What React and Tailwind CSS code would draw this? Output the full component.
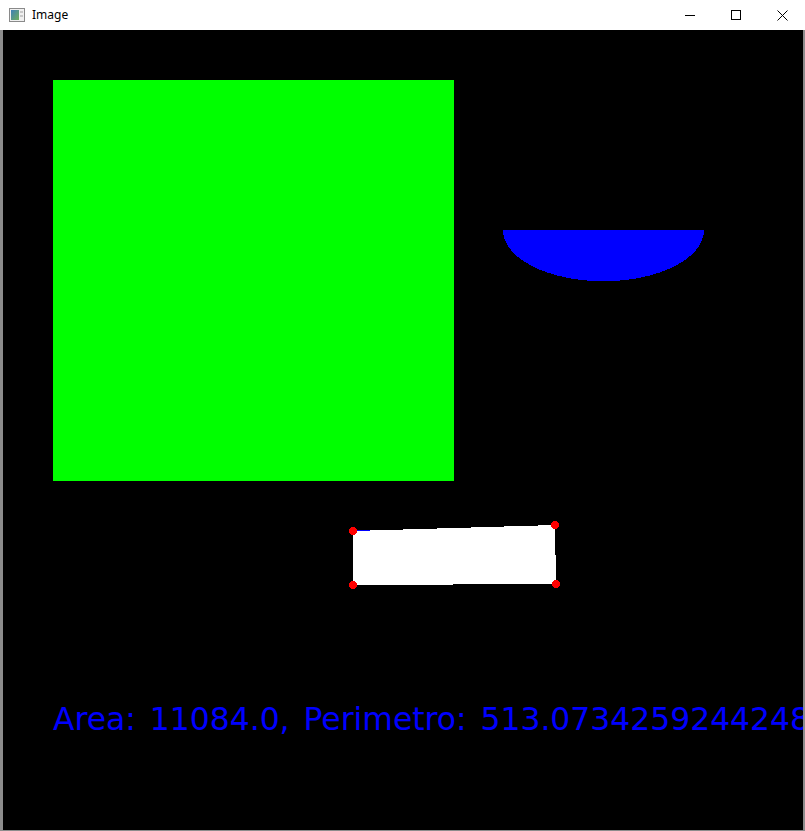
import React from 'react';

// OpenCV imshow window: title bar + 800x800 canvas
const QUAD = '350,501 552,495 553,554 350,555';
const CORNERS = [
  [350, 501],
  [552, 495],
  [553, 554],
  [350, 555],
];

function TitleBar() {
  return (
    <div className="h-[30px] flex items-center bg-white">
      <svg width="16" height="14" viewBox="0 0 16 14" className="ml-[9px] shrink-0">
        <defs>
          <linearGradient id="ic" x1="0" y1="0" x2="1" y2="1">
            <stop offset="0" stopColor="#3f7fb8" />
            <stop offset="1" stopColor="#6fae5a" />
          </linearGradient>
        </defs>
        <rect x="0.5" y="0.5" width="15" height="13" fill="#f0f0f0" stroke="#8a8a8a" />
        <rect x="2" y="2" width="8" height="10" fill="url(#ic)" />
        <rect x="11" y="3" width="3" height="2" fill="#c8c8c8" />
        <rect x="11" y="7" width="3" height="2" fill="#c8c8c8" />
      </svg>
      <span className="ml-[7px] text-[12px] text-black leading-none" style={{ fontFamily: '"Noto Sans", "Open Sans", sans-serif' }}>
        Image
      </span>
      <div className="ml-auto flex h-full">
        <div className="w-[46px] flex items-center justify-center">
          <svg width="10" height="10" viewBox="0 0 10 10">
            <path d="M0 5.5 H10" stroke="#000" strokeWidth="1" />
          </svg>
        </div>
        <div className="w-[46px] flex items-center justify-center">
          <svg width="10" height="10" viewBox="0 0 10 10">
            <rect x="0.5" y="0.5" width="9" height="9" fill="none" stroke="#000" strokeWidth="1" />
          </svg>
        </div>
        <div className="w-[46px] flex items-center justify-center">
          <svg width="11" height="11" viewBox="0 0 11 11">
            <path d="M0.5 0.5 L10.5 10.5 M10.5 0.5 L0.5 10.5" stroke="#000" strokeWidth="1" />
          </svg>
        </div>
      </div>
    </div>
  );
}

export default function App() {
  return (
    <div className="w-[805px] h-[831px] bg-white overflow-hidden">
      <TitleBar />
      <div className="w-[805px] h-[801px] border-l-[3px] border-r-2 border-b border-[#8c8c8c] bg-black">
        <div className="relative w-[800px] h-[800px] overflow-hidden bg-black">
          <svg width="800" height="800" viewBox="0 0 800 800" shapeRendering="crispEdges">
            <rect x="50" y="50" width="401" height="401" fill="#00ff00" />
            <path d="M500 200 A100 51 0 0 0 701 200 Z" fill="#0000ff" />
            <line x1="354" y1="500.5" x2="371" y2="500.5" stroke="#0000ff" strokeWidth="1" />
            <polygon points={QUAD} fill="#ffffff" />
            {CORNERS.map(([x, y]) => (
              <circle key={x + '-' + y} cx={x} cy={y} r="4" fill="#ff0000" />
            ))}
          </svg>
          <div
            className="absolute left-[50px] top-[674px] whitespace-nowrap text-[31.4px] leading-none text-[#0000ff] [word-spacing:4px]"
            style={{ fontFamily: '"DejaVu Sans", sans-serif' }}
          >
            Area: 11084.0, Perimetro: 513.0734259244248
          </div>
        </div>
      </div>
    </div>
  );
}
